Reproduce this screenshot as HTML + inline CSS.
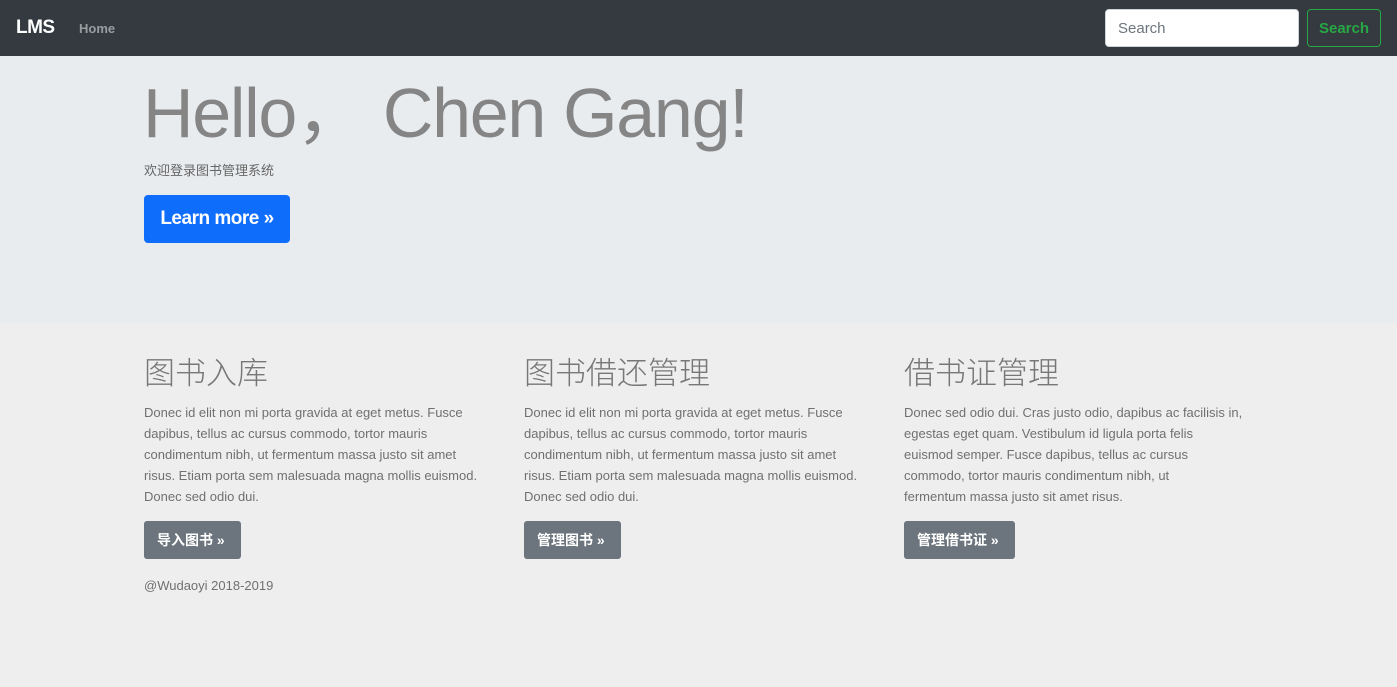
<!DOCTYPE html>
<html><head><meta charset="utf-8"><style>
*{margin:0;padding:0;box-sizing:border-box}
body{width:1397px;height:687px;background:#eeeeee;font-family:"Liberation Sans","Noto Sans CJK SC",sans-serif;color:#707070;overflow:hidden;position:relative}
.nav{position:absolute;left:0;top:0;width:1397px;height:56px;background:#343a40}
.brand{position:absolute;left:16px;top:17px;color:#fff;font-size:19px;font-weight:bold;letter-spacing:-0.5px}
.home{position:absolute;left:79px;top:21px;color:#9a9da0;font-size:13px;font-weight:bold}
.inp{position:absolute;left:1105px;top:9px;width:194px;height:38px;background:#fff;border:1px solid #ced4da;border-radius:4px;color:#6c757d;font-size:15px;padding:10px 12px}
.btn-s{position:absolute;left:1307px;top:9px;width:74px;height:38px;border:1px solid #28a745;border-radius:4px;color:#28a745;font-size:15px;font-weight:bold;padding:10px 0;text-align:center}
.jumbo{position:absolute;left:0;top:56px;width:1397px;height:267px;background:#e9ecef}
h1{position:absolute;left:143px;top:57px;font-size:70px;font-weight:normal;color:#858585;letter-spacing:-1.3px;white-space:nowrap}
.sub{position:absolute;left:144px;top:160px;font-size:13px;color:#666}
.learn{position:absolute;left:144px;top:195px;width:146px;height:48px;background:#0f6dfc;border-radius:4px;color:#fff;font-size:19px;font-weight:bold;text-align:center;line-height:48px;letter-spacing:-0.5px}
.col{position:absolute;top:355px;width:360px}
.col h2{font-size:31px;font-weight:300;color:#777;height:38px;line-height:38px}
.col p{margin-top:9px;font-size:13px;line-height:21px;color:#707070;white-space:nowrap}
.btn{display:inline-block;margin-top:14px;height:38px;line-height:38px;background:#6c757d;color:#fff;border-radius:3px;font-size:14px;font-weight:bold;padding:0 16px 0 13px}
.foot{position:absolute;left:144px;top:578px;font-size:13px;color:#707070}
</style></head><body>
<div class="nav"><div class="brand">LMS</div><div class="home">Home</div>
<div class="inp">Search</div><div class="btn-s">Search</div></div>
<div class="jumbo"></div>
<h1>Hello，&nbsp;Chen Gang!</h1>
<div class="sub">欢迎登录图书管理系统</div>
<div class="learn">Learn more »</div>
<div class="col" style="left:144px"><h2>图书入库</h2><p>Donec id elit non mi porta gravida at eget metus. Fusce<br>dapibus, tellus ac cursus commodo, tortor mauris<br>condimentum nibh, ut fermentum massa justo sit amet<br>risus. Etiam porta sem malesuada magna mollis euismod.<br>Donec sed odio dui.</p><span class="btn">导入图书 »</span></div>
<div class="col" style="left:524px"><h2>图书借还管理</h2><p>Donec id elit non mi porta gravida at eget metus. Fusce<br>dapibus, tellus ac cursus commodo, tortor mauris<br>condimentum nibh, ut fermentum massa justo sit amet<br>risus. Etiam porta sem malesuada magna mollis euismod.<br>Donec sed odio dui.</p><span class="btn">管理图书 »</span></div>
<div class="col" style="left:904px"><h2>借书证管理</h2><p>Donec sed odio dui. Cras justo odio, dapibus ac facilisis in,<br>egestas eget quam. Vestibulum id ligula porta felis<br>euismod semper. Fusce dapibus, tellus ac cursus<br>commodo, tortor mauris condimentum nibh, ut<br>fermentum massa justo sit amet risus.</p><span class="btn">管理借书证 »</span></div>
<div class="foot">@Wudaoyi 2018-2019</div>
</body></html>
